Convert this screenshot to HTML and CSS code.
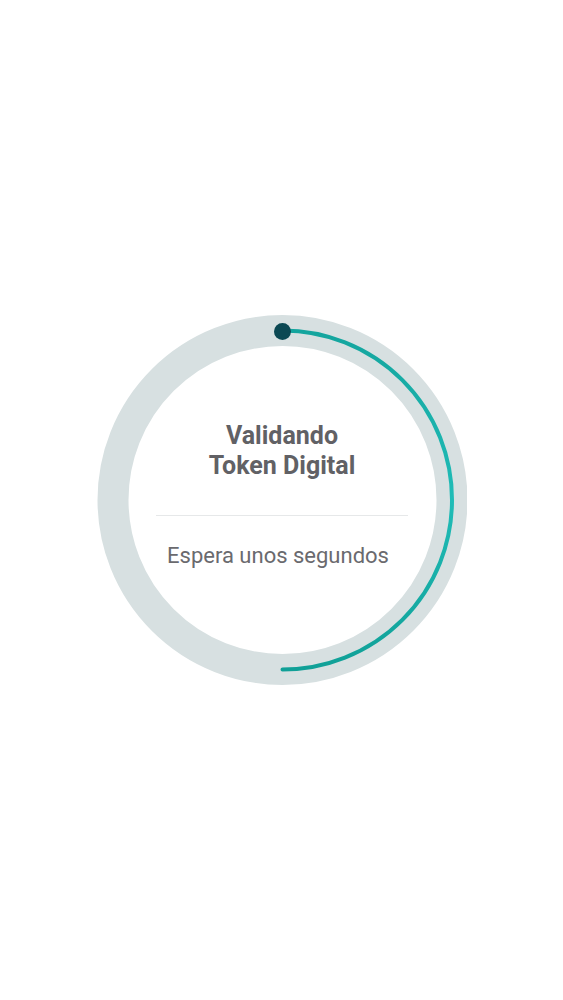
FILE: index.html
```html
<!DOCTYPE html>
<html lang="es">
<head>
<meta charset="utf-8">
<title>Validando Token Digital</title>
<link rel="stylesheet" href="styles.css">
</head>
<body>
<main class="screen">
  <div class="loader">
    <svg class="ring" width="370" height="370" viewBox="0 0 370 370" aria-hidden="true">
      <defs>
        <linearGradient id="arcGrad" x1="0" y1="0" x2="0" y2="1">
          <stop offset="0" stop-color="#14a59e"/>
          <stop offset="0.5" stop-color="#20bcb7"/>
          <stop offset="1" stop-color="#10a097"/>
        </linearGradient>
      </defs>
      <circle cx="185.5" cy="185" r="169.5" fill="none" stroke="#d7e0e1" stroke-width="31"/>
      <path d="M185.5 15.5 A169.5 169.5 0 0 1 185.5 354.5" fill="none" stroke="url(#arcGrad)" stroke-width="4" stroke-linecap="round"/>
      <circle cx="185.5" cy="16.5" r="8.5" fill="#0b4853"/>
    </svg>
    <div class="content">
      <h1 class="title">Validando<br>Token Digital</h1>
      <div class="divider"></div>
      <p class="subtitle">Espera unos segundos</p>
    </div>
  </div>
</main>
</body>
</html>
```
FILE: styles.css
```css
html, body {
  margin: 0;
  padding: 0;
  background: #ffffff;
}
body {
  font-family: Roboto, "Liberation Sans", Arial, sans-serif;
}
.screen {
  height: 1000px;
  display: flex;
  align-items: center;
  justify-content: center;
}
.loader {
  display: grid;
  width: 370px;
  height: 370px;
  margin-left: 1px;
}
.ring, .content {
  grid-area: 1 / 1;
}
.content {
  display: flex;
  flex-direction: column;
  align-items: center;
  padding-top: 106px;
}
.title {
  margin: 0;
  font-size: 25px;
  line-height: 30px;
  font-weight: 700;
  color: #616165;
  text-align: center;
}
.divider {
  width: 252px;
  height: 1px;
  background: #e6e8e9;
  margin-top: 34px;
}
.subtitle {
  margin: 27px 0 0;
  padding-right: 8px;
  font-size: 22px;
  line-height: 26px;
  color: #6a6a6e;
  text-align: center;
}
```
